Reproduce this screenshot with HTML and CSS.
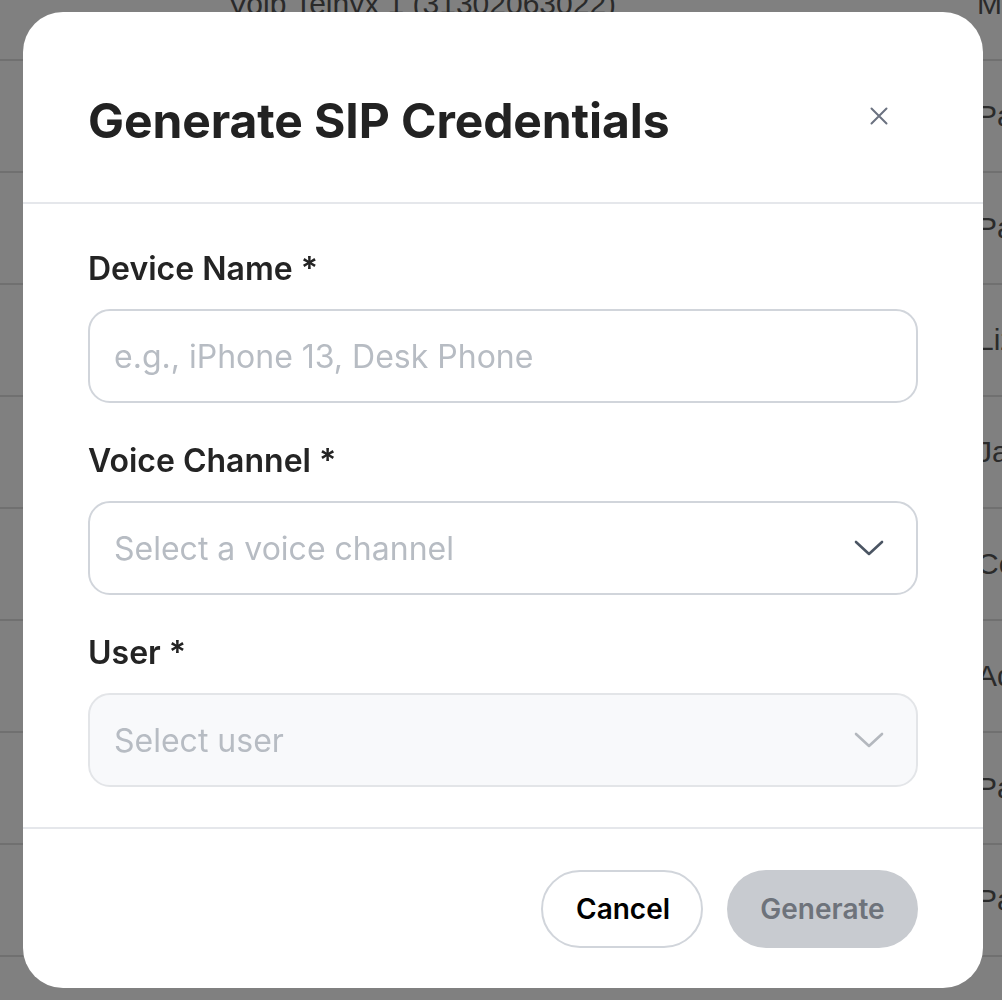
FILE: index.html
```html
<!DOCTYPE html>
<html lang="en">
<head>
<meta charset="utf-8">
<title>Generate SIP Credentials</title>
<link rel="stylesheet" href="styles.css">
</head>
<body>
<div class="page">
  <div class="table">
    <div class="row"><div class="cell-main">Voip Telnyx 1 (31302063022)</div><div class="cell-side">Mark Owens</div></div>
    <div class="row"><div class="cell-main"></div><div class="cell-side">Patricia Gomez</div></div>
    <div class="row"><div class="cell-main"></div><div class="cell-side">Paul Martin</div></div>
    <div class="row"><div class="cell-main"></div><div class="cell-side">Lizzie Brown</div></div>
    <div class="row"><div class="cell-main"></div><div class="cell-side">James Carter</div></div>
    <div class="row"><div class="cell-main"></div><div class="cell-side">Cecilia Ruiz</div></div>
    <div class="row"><div class="cell-main"></div><div class="cell-side">Adam Lee</div></div>
    <div class="row"><div class="cell-main"></div><div class="cell-side">Pablo Diaz</div></div>
    <div class="row"><div class="cell-main"></div><div class="cell-side">Pamela Ford</div></div>
  </div>
</div>

<div class="modal" role="dialog" aria-labelledby="modal-title">
  <div class="modal-header">
    <h2 class="modal-title" id="modal-title">Generate SIP Credentials</h2>
    <button class="close-btn" aria-label="Close">
      <svg width="18" height="18" viewBox="0 0 18 18" fill="none" stroke="#6b7280" stroke-width="2" stroke-linecap="round"><path d="M1.5 1.5 L16.5 16.5 M16.5 1.5 L1.5 16.5"/></svg>
    </button>
  </div>
  <div class="modal-body">
    <div class="field">
      <label class="field-label">Device Name *</label>
      <div class="control"><span class="placeholder">e.g., iPhone 13, Desk Phone</span></div>
    </div>
    <div class="field">
      <label class="field-label">Voice Channel *</label>
      <div class="control select"><span class="placeholder">Select a voice channel</span>
        <svg class="chevron" width="30" height="16" viewBox="0 0 30 16" fill="none" stroke="#4b5563" stroke-width="2.6" stroke-linecap="round" stroke-linejoin="round"><path d="M2 2 L15 14 L28 2"/></svg>
      </div>
    </div>
    <div class="field">
      <label class="field-label">User *</label>
      <div class="control select disabled"><span class="placeholder">Select user</span>
        <svg class="chevron" width="30" height="16" viewBox="0 0 30 16" fill="none" stroke="#b4b8be" stroke-width="2.6" stroke-linecap="round" stroke-linejoin="round"><path d="M2 2 L15 14 L28 2"/></svg>
      </div>
    </div>
  </div>
  <div class="modal-footer">
    <button class="btn btn-cancel">Cancel</button>
    <button class="btn btn-generate">Generate</button>
  </div>
</div>
</body>
</html>
```
FILE: styles.css
```css
html, body {
  margin: 0;
  padding: 0;
  height: 100%;
  overflow: hidden;
}
body {
  background: #808080;
  font-family: "Liberation Sans", Arial, sans-serif;
}
.page {
  width: 100%;
  height: 100%;
  overflow: hidden;
}
.table {
  margin-top: -51px;
}
.row {
  height: 112px;
  box-sizing: border-box;
  border-bottom: 2px solid #707070;
  display: flex;
  align-items: center;
  white-space: nowrap;
  color: #2a2a2a;
  font-size: 30px;
}
.cell-main {
  width: 749px;
  padding-left: 228px;
  flex: none;
}
.cell-side {
  flex: none;
}

.modal {
  position: fixed;
  left: 23px;
  top: 12px;
  width: 960px;
  height: 976px;
  background: #fff;
  border-radius: 40px;
  display: flex;
  flex-direction: column;
  font-family: Inter, "Noto Sans", sans-serif;
  overflow: hidden;
}
.modal-header {
  height: 192px;
  box-sizing: border-box;
  border-bottom: 2px solid #e5e7eb;
  padding: 81px 65px 0 65px;
  display: flex;
  justify-content: space-between;
  align-items: flex-start;
}
.modal-title {
  margin: 0;
  font-size: 48px;
  line-height: 56px;
  font-weight: 700;
  color: #222222;
  letter-spacing: -0.1px;
}
.close-btn {
  width: 34px;
  height: 34px;
  margin: 6px 22px 0 0;
  padding: 0;
  border: none;
  background: transparent;
  display: flex;
  align-items: center;
  justify-content: center;
}
.modal-body {
  padding: 45px 65px 0 65px;
  display: flex;
  flex-direction: column;
  gap: 38px;
  height: 625px;
  box-sizing: border-box;
  border-bottom: 2px solid #e5e7eb;
}
.field {
  display: flex;
  flex-direction: column;
  gap: 20px;
}
.field-label {
  font-size: 32px;
  line-height: 40px;
  font-weight: 600;
  color: #242424;
}
.control {
  height: 94px;
  box-sizing: border-box;
  border: 2px solid #d1d5db;
  border-radius: 22px;
  padding: 0 32px 0 24px;
  display: flex;
  align-items: center;
  justify-content: space-between;
}
.control.disabled {
  background: #f8f9fb;
  border-color: #e3e5e8;
}
.placeholder {
  font-size: 32px;
  color: #b7bcc3;
}
.chevron {
  flex: none;
}
.modal-footer {
  flex: 1;
  display: flex;
  justify-content: flex-end;
  align-items: flex-start;
  gap: 24px;
  padding: 41px 65px 0 65px;
}
.btn {
  height: 78px;
  border-radius: 39px;
  font-family: Inter, "Noto Sans", sans-serif;
  font-size: 28px;
  font-weight: 600;
  padding: 0 33px;
  box-sizing: border-box;
}
.btn-cancel {
  background: #fff;
  border: 2px solid #d1d5db;
  color: #000;
  width: 162px;
}
.btn-generate {
  background: #c8cbd0;
  border: none;
  color: #6e737b;
  width: 191px;
}
```
